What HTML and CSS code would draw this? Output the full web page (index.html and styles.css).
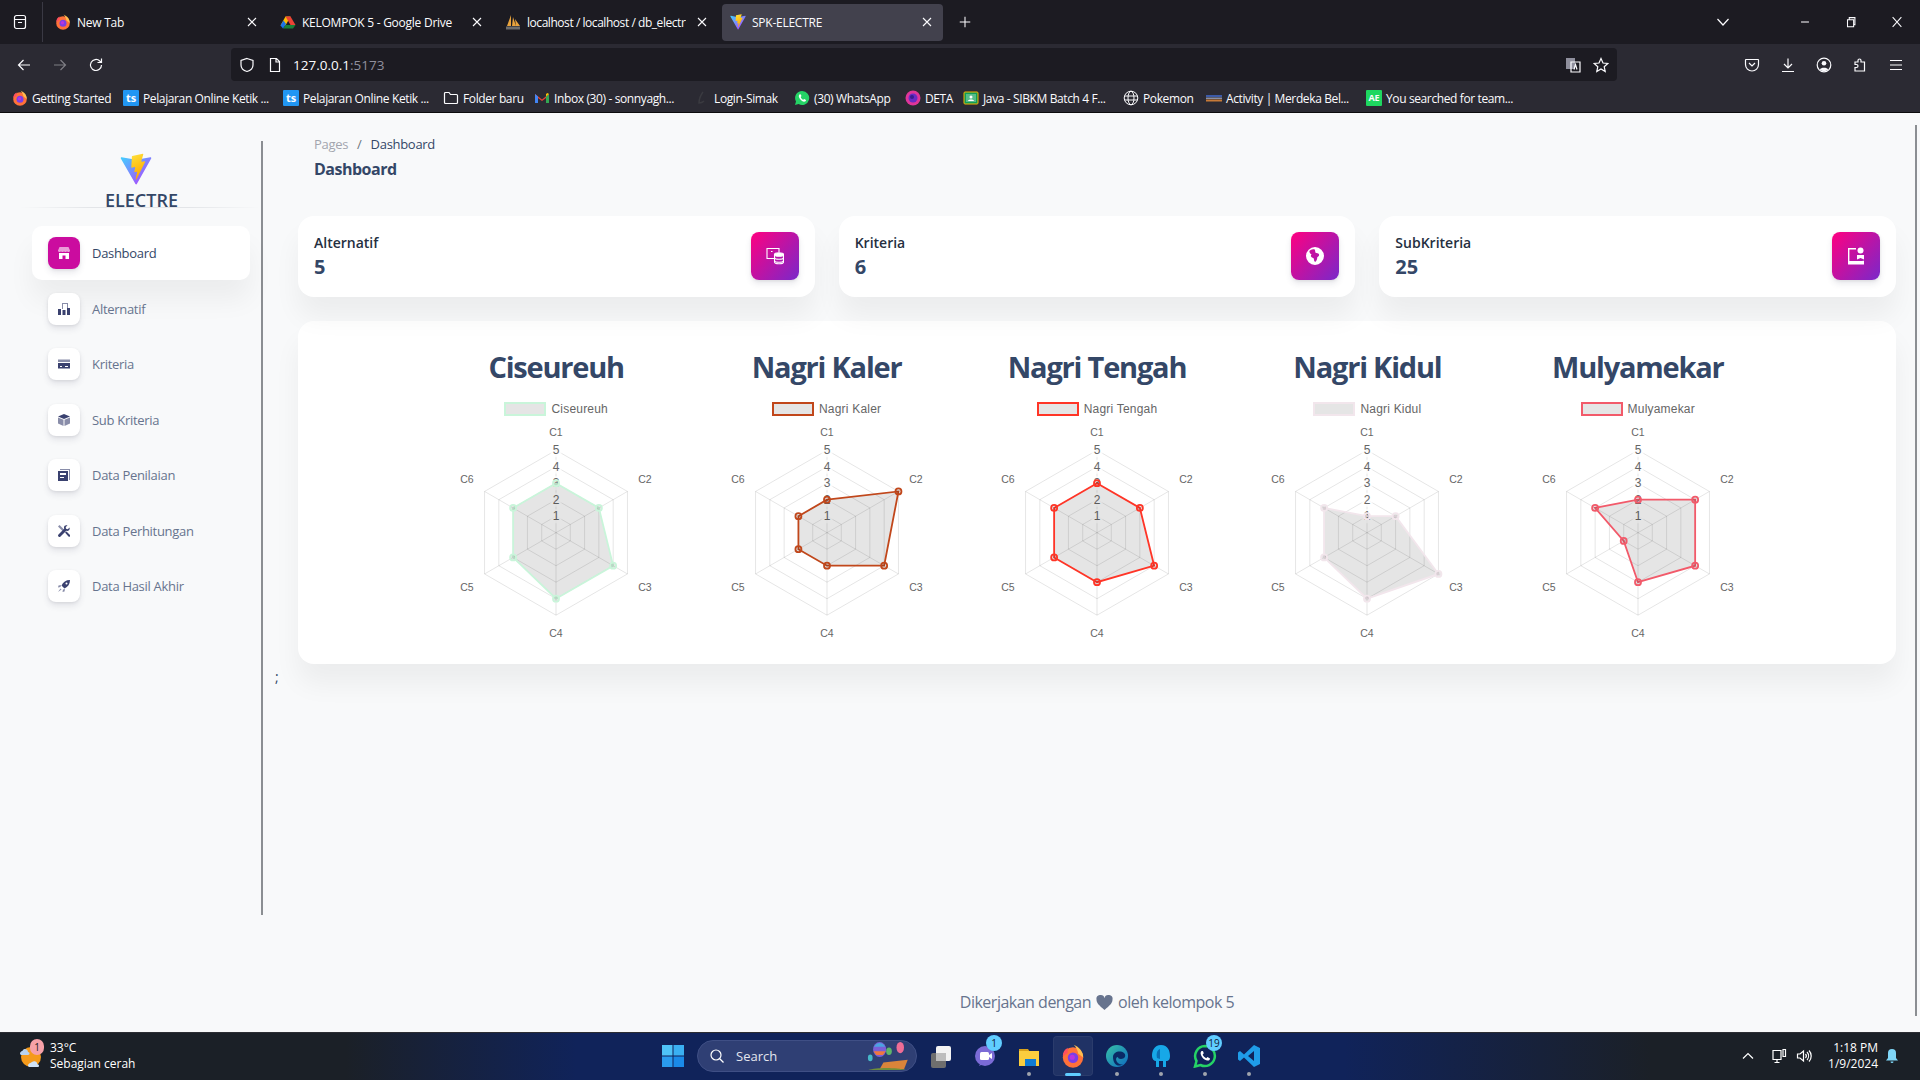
FILE: index.html
```html
<!DOCTYPE html>
<html lang="en">
<head>
    <meta charset="UTF-8">
    <meta name="viewport" content="width=device-width, initial-scale=1.0">
    <title>SPK-ELECTRE</title>
    <link rel="stylesheet" href="styles.css">
</head>
<body>
    <!-- shared icons -->
    <svg class="defs" width="0" height="0">
        <defs>
            <linearGradient id="viteOuter" x1="0" y1="0" x2="1" y2="1"><stop offset="0" stop-color="#41d1ff"/><stop offset="1" stop-color="#bd34fe"/></linearGradient>
            <linearGradient id="viteBolt" x1="0" y1="0" x2="0.3" y2="1"><stop offset="0" stop-color="#ffea83"/><stop offset="0.1" stop-color="#ffdd35"/><stop offset="1" stop-color="#ffa800"/></linearGradient>
            <linearGradient id="edgeGrad" x1="0" y1="0" x2="1" y2="1"><stop offset="0" stop-color="#37c1a6"/><stop offset="1" stop-color="#0f6cc2"/></linearGradient>
        </defs>
        <symbol id="i-firefox" viewBox="0 0 16 16">
            <circle cx="8" cy="9" r="6.800" fill="#ff7139"/>
            <path d="M8.500 0.500c3.500 1.500 6.500 4.500 6.300 8.500L11.500 6.500C11 4 10 2 8.500 0.500z" fill="#ffbd4f"/>
            <path d="M1.200 8C1.200 5.500 2.500 3.500 4.500 2.500L4.500 6z" fill="#ff4f5e"/>
            <circle cx="8" cy="9.200" r="3.500" fill="#7b3fe4"/>
            <circle cx="7.500" cy="8.800" r="1.700" fill="#b833e1"/>
        </symbol>
        <symbol id="i-vite" viewBox="0 0 410 404">
            <path fill="url(#viteOuter)" d="M399.641 59.525L215.643 388.545C211.844 395.338 202.084 395.378 198.228 388.618L10.582 59.556C6.381 52.19 12.68 43.267 21.028 44.759L205.223 77.682C206.398 77.892 207.601 77.89 208.776 77.676L389.119 44.806C397.439 43.289 403.768 52.143 399.641 59.525Z"/>
            <path fill="url(#viteBolt)" d="M292.965 1.574L156.801 28.255C154.563 28.694 152.906 30.59 152.771 32.866L144.395 174.33C144.198 177.662 147.258 180.248 150.51 179.498L188.42 170.749C191.967 169.931 195.172 173.055 194.443 176.622L183.18 231.775C182.422 235.487 185.907 238.661 189.532 237.56L212.947 230.446C216.577 229.344 220.065 232.527 219.297 236.242L201.398 322.875C200.278 328.294 207.486 331.249 210.492 326.603L212.5 323.5L323.454 102.072C325.312 98.365 322.108 94.137 318.036 94.923L279.014 102.454C275.347 103.161 272.227 99.746 273.262 96.158L298.731 7.867C299.767 4.273 296.636 0.855 292.965 1.574Z"/>
        </symbol>
        <symbol id="i-drive" viewBox="0 0 16 16">
            <path d="M5.500 1.500h5l-5 9H.5z" fill="#fbbc04" transform="translate(0 1)"/>
            <path d="M10.500 2.500l5 8.500h-5l-5-8.500z" fill="#ea4335"/>
            <path d="M3 14.500l2.500-3.500H15.500L13 14.500z" fill="#188038"/>
            <path d="M.5 11.500L3 14.500l3-4.500-2.500-3.500z" fill="#1a73e8"/>
        </symbol>
        <symbol id="i-pma" viewBox="0 0 16 16">
            <path d="M6 1L2 12h4zM8 3l-1 9h4zM10 5l1 7h4z" fill="#e8a33d"/>
            <rect x="1" y="12.500" width="14" height="3" fill="#6d6d6d"/>
        </symbol>
        <symbol id="i-folder" viewBox="0 0 16 16">
            <path d="M1.500 3.500a1 1 0 0 1 1-1h3.500l1.500 2h6a1 1 0 0 1 1 1v7a1 1 0 0 1-1 1h-11a1 1 0 0 1-1-1z" fill="none" stroke="#fbfbfe" stroke-width="1.200"/>
        </symbol>
        <symbol id="i-gmail" viewBox="0 0 16 16">
            <path d="M1 13V4l7 5.500L15 4v9h-3V8l-4 3-4-3v5z" fill="#ea4335"/>
            <path d="M1 4v9h3V6.500z" fill="#4285f4"/>
            <path d="M15 4v9h-3V6.500z" fill="#34a853"/>
            <path d="M12 6.500L15 4l-1.500-1L12 4z" fill="#fbbc04"/>
        </symbol>
        <symbol id="i-login" viewBox="0 0 16 16">
            <path d="M9 2C6 6 5 10 5 13c2 0 4-1 5-2" fill="none" stroke="#3a3a40" stroke-width="1.500"/>
        </symbol>
        <symbol id="i-whatsapp" viewBox="0 0 16 16">
            <path d="M8 1a7 7 0 0 0-6 10.500L1 15l3.600-1A7 7 0 1 0 8 1z" fill="#25d366"/>
            <path d="M5.500 4.500c-1 1-1 2.500.5 4.500s3.500 3 5 2.500c.8-.3 1-1 1-1.500L10.200 9l-.9.800C8.300 9.500 7 8.200 6.700 7l.8-.9L6.700 4.400c-.4-.1-.9-.1-1.200.1z" fill="#fff"/>
        </symbol>
        <symbol id="i-deta" viewBox="0 0 16 16">
            <circle cx="8" cy="8" r="7.500" fill="#e0359a"/>
            <circle cx="8" cy="8" r="4.500" fill="#6a2bc4"/>
            <circle cx="7" cy="7" r="2" fill="#3b1c8f"/>
        </symbol>
        <symbol id="i-classroom" viewBox="0 0 16 16">
            <rect x="1" y="2" width="14" height="12" rx="1" fill="#0f9d58" stroke="#f4b400" stroke-width="1"/>
            <rect x="3" y="4" width="10" height="8" fill="#57bb8a"/>
            <circle cx="8" cy="7" r="1.500" fill="#fff"/>
            <path d="M5 11c0-2 6-2 6 0z" fill="#fff"/>
        </symbol>
        <symbol id="i-globe" viewBox="0 0 16 16">
            <g fill="none" stroke="#fbfbfe" stroke-width="1">
                <circle cx="8" cy="8" r="6.800"/>
                <ellipse cx="8" cy="8" rx="3" ry="6.800"/>
                <path d="M1.500 6h13M1.500 10h13"/>
            </g>
        </symbol>
        <symbol id="i-merdeka" viewBox="0 0 16 16">
            <rect x="0" y="5" width="16" height="2" fill="#3c5aa8"/>
            <rect x="0" y="7.500" width="16" height="1.500" fill="#8a8fa5"/>
            <rect x="0" y="9.500" width="16" height="2" fill="#c77a38"/>
        </symbol>
        <symbol id="i-close" viewBox="0 0 16 16">
            <path d="M4 4l8 8M12 4l-8 8" fill="none" stroke="currentColor" stroke-width="1.100"/>
        </symbol>
    </svg>

    <header class="browser">
        <div class="tabstrip">
            <div class="tab-list-btn">
                <svg class="ico" viewBox="0 0 16 16"><path d="M2.500 5.500h11v7a2 2 0 0 1-2 2h-7a2 2 0 0 1-2-2zM4.500 1.500h7a2 2 0 0 1 2 2v2h-11v-2a2 2 0 0 1 2-2zM6 8.500h4"/></svg>
            </div>
            <div class="tab">
                <svg class="tab-icon"><use href="#i-firefox"/></svg>
                <span class="tab-title">New Tab</span>
                <svg class="tab-close"><use href="#i-close"/></svg>
            </div>
            <div class="tab">
                <svg class="tab-icon"><use href="#i-drive"/></svg>
                <span class="tab-title">KELOMPOK 5 - Google Drive</span>
                <svg class="tab-close"><use href="#i-close"/></svg>
            </div>
            <div class="tab">
                <svg class="tab-icon"><use href="#i-pma"/></svg>
                <span class="tab-title tab-title-long">localhost / localhost / db_electr</span>
                <svg class="tab-close"><use href="#i-close"/></svg>
            </div>
            <div class="tab tab-active">
                <svg class="tab-icon"><use href="#i-vite"/></svg>
                <span class="tab-title">SPK-ELECTRE</span>
                <svg class="tab-close"><use href="#i-close"/></svg>
            </div>
            <svg class="ico new-tab" viewBox="0 0 16 16"><path d="M8 2v12M2 8h12"/></svg>
            <div class="window-controls">
                <svg class="ico tab-overflow" viewBox="0 0 16 16"><path d="M2.500 5l5.500 6 5.500-6"/></svg>
                <svg class="ico win-btn" viewBox="0 0 16 16"><path d="M3.500 8h9"/></svg>
                <svg class="ico win-btn" viewBox="0 0 16 16"><path d="M4 5.500h7v8H4zM6 5.500v-2.500h6.500v8H11"/></svg>
                <svg class="ico win-btn" viewBox="0 0 16 16"><path d="M3 2.500l10 11M13 2.500l-10 11"/></svg>
            </div>
        </div>

        <div class="toolbar">
            <div class="nav-buttons">
                <div class="tool-btn"><svg class="ico" viewBox="0 0 16 16"><path d="M14 8H2.500M7.500 3l-5 5 5 5"/></svg></div>
                <div class="tool-btn tool-dim"><svg class="ico" viewBox="0 0 16 16"><path d="M2 8h11.500M8.500 3l5 5-5 5"/></svg></div>
                <div class="tool-btn"><svg class="ico" viewBox="0 0 16 16"><path d="M13.500 8a5.500 5.500 0 1 1-1.700-4L13.500 5.500M13.500 1.500v4h-4"/></svg></div>
            </div>
            <div class="urlbar">
                <svg class="ico" viewBox="0 0 16 16"><path d="M8 1.500l6 2v4.500c0 3.500-2.500 5.500-6 6.500-3.500-1-6-3-6-6.500V3.500z"/></svg>
                <svg class="ico" viewBox="0 0 16 16"><path d="M3.500 1.500h6l3 3v10h-9zM9 1.500v3.500h3.500"/></svg>
                <span class="url">127.0.0.1<span class="url-port">:5173</span></span>
                <svg class="ico url-translate" viewBox="0 0 16 16"><path class="fill-gray" d="M1 1h9v11H1z"/><path d="M6 5h9v10H6z"/><path d="M9 12.500l1.500-5 1.500 5"/></svg>
                <svg class="ico" viewBox="0 0 16 16"><path d="M8 1.500l2 4.500 4.800.5-3.600 3.200 1 4.800L8 12l-4.200 2.500 1-4.800L1.200 6.500 6 6z"/></svg>
            </div>
            <div class="tool-right">
                <div class="tool-btn"><svg class="ico" viewBox="0 0 16 16"><path d="M2 2.500h12a.5.500 0 0 1 .5.500v4.500a6.500 6.500 0 0 1-13 0V3a.5.500 0 0 1 .5-.5zM5 6l3 3 3-3"/></svg></div>
                <div class="tool-btn"><svg class="ico" viewBox="0 0 16 16"><path d="M8 1.500v9M4 7l4 4 4-4M2 14.500h12"/></svg></div>
                <div class="tool-btn"><svg class="ico" viewBox="0 0 16 16"><circle cx="8" cy="8" r="6.800"/><circle class="fill-white" cx="8" cy="6.300" r="2.300"/><path class="fill-white" d="M3.800 12.500c1-2.500 7.400-2.500 8.400 0a6 6 0 0 1-8.400 0z"/></svg></div>
                <div class="tool-btn"><svg class="ico" viewBox="0 0 16 16"><path d="M3 5h3V3.500a1.500 1.500 0 0 1 3 0V5h3.500v9H3v-3.500h1.500a1.500 1.500 0 0 0 0-3H3z"/></svg></div>
                <div class="tool-btn"><svg class="ico" viewBox="0 0 16 16"><path d="M2 3.500h12M2 8h12M2 12.500h12"/></svg></div>
            </div>
        </div>

        <div class="bookmarks">
            <a class="bm"><svg><use href="#i-firefox"/></svg>Getting Started</a>
            <a class="bm"><span class="bm-badge badge-ts">ts</span>Pelajaran Online Ketik ...</a>
            <a class="bm"><span class="bm-badge badge-ts">ts</span>Pelajaran Online Ketik ...</a>
            <a class="bm"><svg><use href="#i-folder"/></svg>Folder baru</a>
            <a class="bm"><svg><use href="#i-gmail"/></svg>Inbox (30) - sonnyagh...</a>
            <a class="bm"><svg><use href="#i-login"/></svg>Login-Simak</a>
            <a class="bm"><svg><use href="#i-whatsapp"/></svg>(30) WhatsApp</a>
            <a class="bm"><svg><use href="#i-deta"/></svg>DETA</a>
            <a class="bm"><svg><use href="#i-classroom"/></svg>Java - SIBKM Batch 4 F...</a>
            <a class="bm"><svg><use href="#i-globe"/></svg>Pokemon</a>
            <a class="bm"><svg><use href="#i-merdeka"/></svg>Activity | Merdeka Bel...</a>
            <a class="bm"><span class="bm-badge badge-ae">AE</span>You searched for team...</a>
        </div>
    </header>

    <div class="page">
        <aside class="sidebar">
            <svg class="brand-logo"><use href="#i-vite"/></svg>
            <div class="brand-name">ELECTRE</div>
            <hr class="brand-line">
            <nav class="side-nav">
                <a class="nav-item active">
                    <span class="nav-icon">
                        <svg viewBox="0 0 12 12"><path class="shade" d="M1.500 0h9L12 3.500c0 1-1 1.500-1.500 1.500S9 4.500 9 4.500 8 5 7.500 5 6 4.500 6 4.500 5 5 4.500 5 3 4.500 3 4.500 2 5 1.500 5 0 4.500 0 3.500z"/><path d="M1 6h10v6H7.500V8.500h-3V12H1z"/></svg>
                    </span>
                    Dashboard
                </a>
                <a class="nav-item">
                    <span class="nav-icon">
                        <svg viewBox="0 0 12 12"><path class="shade" d="M4 0h6v5H9V1H5v5H4z"/><path d="M0 6h3v6H0zM4.500 7h3v5h-3zM9 5h3v7H9z"/></svg>
                    </span>
                    Alternatif
                </a>
                <a class="nav-item">
                    <span class="nav-icon">
                        <svg viewBox="0 0 12 12"><path class="shade" d="M0 1.500h12v2.500H0z"/><path d="M0 5h12v5.500H0zM2 8v1h2V8zM7 8v1h3V8z" fill-rule="evenodd"/></svg>
                    </span>
                    Kriteria
                </a>
                <a class="nav-item">
                    <span class="nav-icon">
                        <svg viewBox="0 0 12 12"><path d="M6 0l6 2.500L6 5 0 2.500z"/><path class="shade" d="M0 3.500l5.500 2.300V12L0 9.500zM12 3.500L6.500 5.800V12L12 9.500z"/></svg>
                    </span>
                    Sub Kriteria
                </a>
                <a class="nav-item">
                    <span class="nav-icon">
                        <svg viewBox="0 0 12 12"><path class="shade" d="M2 0h10v11h-1V1H2z"/><path d="M0 2h10v10H0zM2 4v2h6V4zM2 8v1h4V8z" fill-rule="evenodd"/></svg>
                    </span>
                    Data Penilaian
                </a>
                <a class="nav-item">
                    <span class="nav-icon">
                        <svg viewBox="0 0 12 12"><path class="shade" d="M0 1.500L1.500 0l5 5-1.500 1.500z"/><path d="M11.500 2.500L9.800 4.200 8 3.800l-.3-1.700L9.500.5C8-.3 6 .5 6 2.500c0 .5.100.8.200 1.200L.5 9.500a1.400 1.400 0 0 0 2 2L8.300 5.800c2 .7 4-1 3.200-3.300zM7 7.500l3.500 4a1 1 0 0 0 1.500-1.500L8.500 6.500z"/></svg>
                    </span>
                    Data Perhitungan
                </a>
                <a class="nav-item">
                    <span class="nav-icon">
                        <svg viewBox="0 0 12 12"><path d="M12 0C8 0 5 2 3.500 5.500L6.500 8.500C10 7 12 4 12 0zM8.500 2.500a1 1 0 1 1 0 2 1 1 0 0 1 0-2z" fill-rule="evenodd"/><path class="shade" d="M3 5L.5 5.500 0 7.500l2.500-.5zM7 9l-.5 2.500-2 .5.500-2.500zM2.500 8.500L0 12l3.500-2.500z"/></svg>
                    </span>
                    Data Hasil Akhir
                </a>
            </nav>
        </aside>

        <main class="main">
            <div class="content">
                <div class="page-head">
                    <div class="crumbs"><span class="crumb-muted">Pages</span><span class="crumb-sep">/</span><span>Dashboard</span></div>
                    <h6 class="page-title">Dashboard</h6>
                </div>

                <section class="stats">
                    <div class="card stat">
                        <div>
                            <p class="stat-label">Alternatif</p>
                            <p class="stat-value">5</p>
                        </div>
                        <div class="stat-icon">
                            <svg viewBox="0 0 18 18" fill="none" stroke="#fff" stroke-width="1.100"><path d="M9 11.500H1V1.500h12V5"/><path d="M5 4.500h1.500"/><ellipse cx="13" cy="7.500" rx="4.500" ry="1.800" fill="#fff"/><path d="M8.500 10.500c0 2.300 9 2.300 9 0M8.500 13.500c0 2.300 9 2.300 9 0"/><path d="M8.500 7.500v7.500c0 2.300 9 2.300 9 0V7.500"/></svg>
                        </div>
                    </div>
                    <div class="card stat">
                        <div>
                            <p class="stat-label">Kriteria</p>
                            <p class="stat-value">6</p>
                        </div>
                        <div class="stat-icon">
                            <svg viewBox="1 1 16 16"><path fill="#fff" fill-rule="evenodd" d="M9 1a8 8 0 1 0 0 16A8 8 0 0 0 9 1zM4 4.500c1.500-1.500 3-1.500 4.500-1.500 1 1 .5 2.500 1 3 1 .5 2.500 0 3 1.500.5 1-.5 2-1.500 2.500 0 1.500-.5 3-1.500 4-1 .5-1.500-1-1.500-2.500-.5-1-2-1-2.500-2-.5-.5 0-1.500.5-2C5 7.500 4 6 4 4.500z"/></svg>
                        </div>
                    </div>
                    <div class="card stat">
                        <div>
                            <p class="stat-label">SubKriteria</p>
                            <p class="stat-value">25</p>
                        </div>
                        <div class="stat-icon">
                            <svg viewBox="0 0 18 18"><path fill="none" stroke="#fff" stroke-width="1.400" d="M9 1.700H1.700v15h14.600v-3"/><path fill="#fff" d="M1.700 14h14.600v3H1.700z"/><circle cx="13.500" cy="3.500" r="3" fill="#fff"/><path fill="#fff" d="M10 8h7v4.500l-3.500-1.500-3.500 1.500z"/></svg>
                        </div>
                    </div>
                </section>

                <section class="card charts">
                    <div class="chart chart-green">
                        <h2 class="chart-title">Ciseureuh</h2>
                        <div class="legend"><span class="swatch"></span><span class="legend-text">Ciseureuh</span></div>
                        <svg class="radar" data-values="3,3,4,4,3,3"></svg>
                    </div>
                    <div class="chart chart-rust">
                        <h2 class="chart-title">Nagri Kaler</h2>
                        <div class="legend"><span class="swatch"></span><span class="legend-text">Nagri Kaler</span></div>
                        <svg class="radar" data-values="2,5,4,2,2,2"></svg>
                    </div>
                    <div class="chart chart-red">
                        <h2 class="chart-title">Nagri Tengah</h2>
                        <div class="legend"><span class="swatch"></span><span class="legend-text">Nagri Tengah</span></div>
                        <svg class="radar" data-values="3,3,4,3,3,3"></svg>
                    </div>
                    <div class="chart chart-pale">
                        <h2 class="chart-title">Nagri Kidul</h2>
                        <div class="legend"><span class="swatch"></span><span class="legend-text">Nagri Kidul</span></div>
                        <svg class="radar" data-values="1,2,5,4,3,3"></svg>
                    </div>
                    <div class="chart chart-coral">
                        <h2 class="chart-title">Mulyamekar</h2>
                        <div class="legend"><span class="swatch"></span><span class="legend-text">Mulyamekar</span></div>
                        <svg class="radar" data-values="2,4,4,3,1,3"></svg>
                    </div>
                </section>
            </div>

            <p class="stray">;</p>

            <footer class="footer">
                Dikerjakan dengan
                <svg class="heart" viewBox="0 0 16 16"><path d="M8 15C3 11 .5 8.500.5 5.500A3.800 3.800 0 0 1 8 4a3.800 3.800 0 0 1 7.500 1.500C15.500 8.500 13 11 8 15z"/></svg>
                oleh kelompok 5
            </footer>

            <div class="scroll-line"></div>
        </main>
    </div>

    <footer class="taskbar">
        <div class="weather">
            <div class="weather-icon">
                <svg viewBox="0 0 24 28">
                    <circle cx="13" cy="15" r="10" fill="#f59a1b"/>
                    <path d="M2 12c0-3 3-3 3-4 1-2 5-1 5 2 2 0 2 3 0 3H3z" fill="#b9d3f0"/>
                    <path d="M10 24c0-3 3-3 4-4 2-2 6 0 5 2 2 0 3 3 1 3H11z" fill="#cfe2f7"/>
                </svg>
                <span class="weather-badge">1</span>
            </div>
            <div class="weather-text">
                <span>33°C</span>
                <span>Sebagian cerah</span>
            </div>
        </div>

        <div class="task-btn">
            <svg viewBox="0 0 24 24"><path fill="#4fc3f7" d="M1 1h10.500v10.500H1z"/><path fill="#3ab0f2" d="M12.500 1H23v10.500H12.500z"/><path fill="#2a9bee" d="M1 12.500h10.500V23H1z"/><path fill="#1a8ae8" d="M12.500 12.500H23V23H12.500z"/></svg>
        </div>

        <div class="search-pill">
            <svg class="ico search-glass" viewBox="0 0 16 16"><circle cx="7" cy="7" r="5"/><path d="M10.500 10.500l4 4"/></svg>
            <span class="search-text">Search</span>
            <svg class="search-art" viewBox="0 0 48 32">
                <ellipse cx="14" cy="9" rx="7" ry="8" fill="#7b5fd6"/>
                <path d="M8 6a7 8 0 0 1 12 0z" fill="#4aa3e0"/>
                <path d="M7.500 11h13l-3 4h-7z" fill="#f0773f"/>
                <ellipse cx="36" cy="7" rx="4" ry="6" fill="#ef6d96"/>
                <ellipse cx="24" cy="11" rx="3" ry="4" fill="#5fb56a"/>
                <ellipse cx="4" cy="18" rx="2.500" ry="3.500" fill="#46b7c9"/>
                <path d="M14 30l4-7 26-3-4 10z" fill="#d9843a"/>
                <path d="M2 31c8-3 30-3 40 0z" fill="#6f8f3a"/>
            </svg>
        </div>

        <div class="task-btn">
            <svg viewBox="0 0 24 24"><rect x="7" y="2" width="15" height="15" rx="2" fill="#f3f3f3"/><rect x="2" y="9" width="15" height="15" rx="2" fill="#6e6e6e"/><rect x="7" y="9" width="10" height="8" fill="#bdbdbd"/></svg>
        </div>
        <div class="task-btn badge-host">
            <svg viewBox="0 0 24 24"><circle cx="12" cy="12" r="10" fill="#7b6bd6"/><path d="M6 22l2-4h6z" fill="#7b6bd6"/><rect x="7" y="8" width="9" height="8" rx="1.500" fill="#fff"/><path d="M16 11l3-2v6l-3-2z" fill="#fff"/></svg>
            <span class="task-badge">1</span>
        </div>
        <div class="task-btn">
            <svg viewBox="0 0 24 24"><path d="M2 5h9l2 3H2z" fill="#d9a21b"/><path d="M2 7h20v15H2z" fill="#fbcd3e"/><rect x="8" y="15" width="11" height="7" fill="#0f7bd4"/></svg>
            <i class="dot"></i>
        </div>
        <div class="task-btn task-current">
            <svg><use href="#i-firefox"/></svg>
            <i class="dot dot-wide"></i>
        </div>
        <div class="task-btn">
            <svg viewBox="0 0 24 24"><circle cx="12" cy="12" r="11" fill="url(#edgeGrad)"/><path d="M8 13c0-5 7-7 11-4 3 3 0 6-3 6-2 0-3-1-3-2-2 0-3 3 0 6 1 1 3 2 5 1-5 4-10 0-10-7z" fill="#0a2a66"/></svg>
            <i class="dot"></i>
        </div>
        <div class="task-btn">
            <svg viewBox="0 0 24 24"><path d="M12 1C5 1 3 7 3 12c0 3 2 5 4 5v6h3v-6h4v6h3v-6c3 0 4-2 4-5 0-5-2-11-9-11z" fill="#17a8e8"/><path d="M11 5c-3 1-4 5-3 9l3 1z" fill="#0a6fb4"/></svg>
            <i class="dot"></i>
        </div>
        <div class="task-btn badge-host">
            <svg viewBox="0 0 24 24"><path d="M12 2A10 10 0 0 0 3.500 17L2 22.500 7.500 21A10 10 0 1 0 12 2z" fill="none" stroke="#25d366" stroke-width="2.500"/><path d="M8.500 7c-1.500 1.500-1 3.500.5 6s4.500 4 6.500 3.500c1-.3 1.500-1.300 1.500-2l-2.500-1.500-1.300 1.200c-1.300-.5-3-2.200-3.500-3.700l1.100-1.200L10 7.200c-.5-.3-1-.4-1.500-.2z" fill="#fff"/></svg>
            <span class="task-badge">19</span>
            <i class="dot"></i>
        </div>
        <div class="task-btn">
            <svg viewBox="0 0 24 24"><path d="M17 1l6 3v16l-6 3-10-9.500L3 17l-2-1.500V8.500L3 7l4 3.500zM17 7l-6 5 6 5z" fill="#1f9ce8" fill-rule="evenodd"/></svg>
            <i class="dot"></i>
        </div>

        <div class="tray">
            <svg class="ico" viewBox="0 0 16 16"><path d="M3 10.500L8 5.500l5 5"/></svg>
            <svg class="ico tray-net" viewBox="0 0 16 16"><path d="M2 2.500h8v9H2zM12 1.500h2.500v7H12zM6 11.500v2.500M3.500 14.500h5"/></svg>
            <svg class="ico tray-vol" viewBox="0 0 16 16"><path d="M1.500 6h2.500L7.500 3v10L4 10H1.500zM9.500 6a3 3 0 0 1 0 4M11 4a6 6 0 0 1 0 8M13 2.500a8 8 0 0 1 0 11"/></svg>
            <div class="clock"><span>1:18 PM</span><span>1/9/2024</span></div>
            <svg class="tray-bell" viewBox="0 0 16 16"><path fill="#7fd6f7" d="M8 1a4 4 0 0 0-4 4v5l-2 2.500h12L12 10V5a4 4 0 0 0-4-4zM6.500 13.500h3a1.500 1.500 0 0 1-3 0z"/></svg>
        </div>
    </footer>

    <script src="charts.js"></script>
</body>
</html>
```

FILE: styles.css
```css
* {
    box-sizing: border-box;
}

body {
    margin: 0;
    width: 1920px;
    height: 1080px;
    overflow: hidden;
    display: flex;
    flex-direction: column;
    font-family: "Open Sans", "Noto Sans", sans-serif;
    background-color: #f8f9fa;
}

.defs {
    position: absolute;
}

.ico {
    width: 16px;
    height: 16px;
    flex: none;
    fill: none;
    stroke: currentColor;
    stroke-width: 1.2;
}

.fill-gray {
    fill: #8f8f9d;
    stroke: none;
}

.fill-white {
    fill: #fbfbfe;
    stroke: none;
}

/* browser chrome */
.browser {
    flex: none;
    color: #fbfbfe;
    font-size: 12px;
}

.tabstrip {
    height: 44px;
    display: flex;
    align-items: center;
    background-color: #1c1b22;
}

.tab-list-btn {
    width: 43px;
    height: 40px;
    padding-left: 12px;
    margin-right: 4px;
    display: flex;
    align-items: center;
    border-right: 1px solid #3a3944;
}

.tab {
    width: 221px;
    height: 37px;
    margin-right: 4px;
    padding: 0 8px;
    display: flex;
    align-items: center;
    gap: 6px;
    border-radius: 4px;
}

.tab-active {
    background-color: #42414d;
}

.tab-icon {
    width: 16px;
    height: 16px;
    flex: none;
}

.tab-title {
    flex: 1;
    overflow: hidden;
    white-space: nowrap;
    letter-spacing: -0.25px;
}

.tab-title-long {
    letter-spacing: -0.45px;
}

.tab-close {
    width: 16px;
    height: 16px;
    flex: none;
    margin-left: 2px;
}

.new-tab {
    margin-left: 11px;
    width: 14px;
    height: 14px;
}

.window-controls {
    margin-left: auto;
    display: flex;
    align-items: center;
}

.tab-overflow {
    margin-right: 67px;
}

.win-btn {
    width: 14px;
    height: 14px;
    margin-right: 32px;
}

.win-btn:last-child {
    margin-right: 16px;
}

.toolbar {
    height: 42px;
    padding-bottom: 1px;
    display: flex;
    align-items: center;
    background-color: #2b2a33;
}

.nav-buttons {
    display: flex;
    padding-left: 6px;
    width: 231px;
}

.tool-btn {
    width: 36px;
    display: flex;
    justify-content: center;
}

.tool-dim {
    opacity: 0.4;
}

.urlbar {
    width: 1386px;
    height: 33px;
    padding: 0 8px;
    display: flex;
    align-items: center;
    gap: 12px;
    background-color: #1c1b22;
    border-radius: 4px;
}

.url {
    margin-left: -2px;
    font-size: 13.5px;
}

.url-port {
    color: #8f8f9d;
}

.url-translate {
    margin-left: auto;
}

.tool-right {
    margin-left: auto;
    padding-right: 6px;
    display: flex;
}

.bookmarks {
    height: 27px;
    padding: 0 0 2px 12px;
    display: grid;
    grid-template-columns: 111px 160px 160px 91px 160px 100px 111px 58px 160px 83px 160px 160px;
    align-items: center;
    background-color: #2b2a33;
    border-bottom: 1px solid #0c0c0d;
    letter-spacing: -0.38px;
}

.bm {
    display: flex;
    align-items: center;
    gap: 4px;
    white-space: nowrap;
}

.bm svg {
    width: 16px;
    height: 16px;
    flex: none;
}

.bm-badge {
    width: 16px;
    height: 16px;
    flex: none;
    border-radius: 1px;
    font-size: 11px;
    line-height: 15px;
    font-weight: 700;
    text-align: center;
    letter-spacing: 0;
}

.badge-ts {
    background-color: #2196f3;
}

.badge-ae {
    background-color: #1ed760;
    font-size: 9px;
}

/* page */
.page {
    flex: 1;
    display: flex;
    min-height: 0;
}

.sidebar {
    flex: none;
    width: 263px;
    height: 774px;
    margin-top: 28px;
    border-right: 2px solid #8b8e92;
    display: flex;
    flex-direction: column;
}

.brand-logo {
    width: 32px;
    height: 33px;
    margin: 12px 0 0 120px;
}

.brand-name {
    margin: 7px 0 0 105px;
    font-size: 18px;
    line-height: 14px;
    font-weight: 600;
    color: #344767;
}

.brand-line {
    width: 240px;
    height: 1px;
    margin: 0 0 18px 20px;
    border: 0;
    background-image: linear-gradient(90deg, transparent, #e3e5e8 30%, #e3e5e8 70%, transparent);
}

.side-nav {
    display: flex;
    flex-direction: column;
    gap: 1.5px;
    margin-left: 32px;
    width: 218px;
}

.nav-item {
    height: 54px;
    padding: 0 16px;
    display: flex;
    align-items: center;
    gap: 12px;
    border-radius: 10px;
    font-size: 13px;
    letter-spacing: -0.3px;
    color: #67748e;
}

.nav-item.active {
    background-color: #fff;
    color: #344767;
    box-shadow: 0 20px 27px rgba(0, 0, 0, 0.05);
}

.nav-icon {
    width: 32px;
    height: 32px;
    display: flex;
    align-items: center;
    justify-content: center;
    border-radius: 8px;
    background-color: #fff;
    box-shadow: 0 4px 6px rgba(50, 50, 93, 0.1), 0 1px 3px rgba(0, 0, 0, 0.08);
}

.nav-icon svg {
    width: 12px;
    height: 12px;
    fill: #3a416f;
}

.nav-icon .shade {
    opacity: 0.6;
}

.nav-item.active .nav-icon {
    background-color: #cb0c9f;
}

.nav-item.active .nav-icon svg {
    fill: #fff;
}

.main {
    flex: 1;
    position: relative;
    min-width: 0;
    padding: 21px 24px 0 12px;
    display: flex;
    flex-direction: column;
}

.content {
    margin-left: 23px;
}

.page-head {
    padding-left: 16px;
    margin-bottom: 35px;
    color: #344767;
}

.crumbs {
    font-size: 13px;
    line-height: 20px;
    letter-spacing: -0.3px;
    display: flex;
}

.crumb-muted {
    color: #a3a5ae;
}

.crumb-sep {
    margin: 0 9px;
    color: #6c757d;
}

.page-title {
    margin: 3px 0 0;
    font-size: 16px;
    line-height: 24px;
    font-weight: 700;
    letter-spacing: -0.5px;
}

.stats {
    display: flex;
    gap: 24px;
    margin-bottom: 24px;
}

.card {
    background-color: #fff;
    border-radius: 16px;
    box-shadow: 0 20px 27px rgba(0, 0, 0, 0.05);
}

.stat {
    flex: 1;
    height: 81px;
    padding: 16px;
    display: flex;
    justify-content: space-between;
}

.stat-label {
    margin: 1px 0 0;
    font-size: 14px;
    line-height: 20px;
    font-weight: 600;
    color: #252f40;
}

.stat-value {
    margin: 1px 0 0;
    font-size: 20px;
    line-height: 26px;
    font-weight: 700;
    color: #344767;
}

.stat-icon {
    width: 48px;
    height: 48px;
    display: flex;
    align-items: center;
    justify-content: center;
    border-radius: 8px;
    background-image: linear-gradient(310deg, #7928ca, #ff0080);
    box-shadow: 0 4px 6px rgba(50, 50, 93, 0.1), 0 1px 3px rgba(0, 0, 0, 0.08);
}

.stat-icon svg {
    width: 18px;
    height: 18px;
}

/* charts */
.charts {
    height: 343px;
    padding-top: 23px;
    display: flex;
    justify-content: center;
}

.chart {
    width: 270.4px;
    display: flex;
    flex-direction: column;
    align-items: center;
}

.chart-green { color: #c9f5da; }
.chart-rust { color: #c1471b; }
.chart-red { color: #ff3527; }
.chart-pale { color: #f2e6ec; }
.chart-coral { color: #f25a6a; }

.chart-title {
    margin: 0;
    font-size: 29px;
    line-height: 45px;
    font-weight: 700;
    letter-spacing: -1.2px;
    color: #344767;
    white-space: nowrap;
}

.legend {
    margin-top: 13px;
    margin-bottom: 1px;
    display: flex;
    align-items: center;
    gap: 5px;
    height: 14px;
}

.swatch {
    width: 42px;
    height: 14px;
    background-color: #e5e5e5;
    border: 2px solid currentColor;
}

.legend-text {
    font-family: "Liberation Sans", Arial, sans-serif;
    font-size: 12px;
    letter-spacing: 0.2px;
    color: #666;
}

.radar {
    width: 270px;
    height: 225px;
    margin-top: 4px;
}

.radar text {
    font-family: "Liberation Sans", Arial, sans-serif;
    fill: #666;
    text-anchor: middle;
    dominant-baseline: central;
}

.radar .tick {
    font-size: 12px;
}

.radar .axis-label {
    font-size: 10.5px;
}

.radar .grid {
    fill: none;
    stroke: rgba(0, 0, 0, 0.1);
    stroke-width: 1;
}

.radar .backdrop {
    fill: rgba(255, 255, 255, 0.75);
}

.radar .area {
    fill: rgba(0, 0, 0, 0.1);
    stroke: currentColor;
    stroke-width: 1.8;
}

.radar .point {
    fill: rgba(0, 0, 0, 0.1);
    stroke: currentColor;
    stroke-width: 1.8;
}

.stray {
    margin: 3px 0 0;
    font-size: 14px;
    line-height: 20px;
    color: #344767;
}

.footer {
    margin: auto 0 18px 23px;
    height: 24px;
    display: flex;
    align-items: center;
    justify-content: center;
    gap: 5px;
    font-size: 16px;
    letter-spacing: -0.5px;
    color: #67748e;
}

.heart {
    width: 17px;
    height: 17px;
    fill: #67748e;
}

.scroll-line {
    position: absolute;
    top: 12px;
    bottom: 16px;
    right: 3px;
    width: 2px;
    background-color: #8b8e92;
}

/* windows taskbar */
.taskbar {
    flex: none;
    height: 48px;
    padding-bottom: 2px;
    display: flex;
    align-items: center;
    color: #fff;
    font-size: 12px;
    border-top: 1px solid #2c2d33;
    background-image: linear-gradient(90deg, #1b2027 0, #1b2027 18%, #10235a 30%, #10235a 70%, #1b2027 86%);
}

.weather {
    width: 651px;
    padding-left: 18px;
    display: flex;
    align-items: center;
    gap: 8px;
}

.weather-icon {
    position: relative;
    width: 24px;
    height: 28px;
}

.weather-icon svg {
    width: 24px;
    height: 28px;
}

.weather-badge {
    position: absolute;
    top: -3px;
    left: 12px;
    width: 14px;
    height: 16px;
    border-radius: 8px;
    background-color: #f7a1a8;
    color: #222;
    font-size: 10px;
    line-height: 16px;
    text-align: center;
}

.weather-text {
    display: flex;
    flex-direction: column;
    line-height: 16px;
    font-size: 12px;
}

.task-btn {
    position: relative;
    width: 44px;
    height: 40px;
    flex: none;
    display: flex;
    align-items: center;
    justify-content: center;
    border-radius: 4px;
}

.task-btn > svg {
    width: 24px;
    height: 24px;
}

.task-current {
    width: 40px;
    margin: 0 2px;
    background-color: rgba(255, 255, 255, 0.07);
    box-shadow: inset 0 0 0 1px rgba(255, 255, 255, 0.05);
}

.dot {
    position: absolute;
    left: 20px;
    bottom: 0;
    width: 4px;
    height: 4px;
    border-radius: 2px;
    background-color: #a0a4ad;
}

.dot-wide {
    left: 12px;
    width: 16px;
    height: 3px;
    background-color: #60cdff;
}

.task-badge {
    position: absolute;
    top: -1px;
    left: 23px;
    min-width: 16px;
    height: 16px;
    padding: 0 2px;
    border-radius: 8px;
    background-color: #60cdff;
    color: #10193a;
    font-size: 10px;
    line-height: 16px;
    text-align: center;
}

.search-pill {
    width: 220px;
    height: 32px;
    margin: 0 2px;
    padding: 0 3px 0 11px;
    flex: none;
    display: flex;
    align-items: center;
    gap: 11px;
    border-radius: 16px;
    background-color: #2f3f74;
    border: 1px solid #3f4f85;
}

.search-text {
    font-size: 13px;
    color: #e4e6ee;
}

.search-art {
    margin-left: auto;
    width: 48px;
    height: 30px;
}

.tray {
    margin-left: auto;
    padding-right: 20px;
    display: flex;
    align-items: center;
}

.tray-net {
    margin-left: 15px;
}

.tray-vol {
    margin-left: 9px;
}

.clock {
    width: 60px;
    margin: 0 0 0 6px;
    display: flex;
    flex-direction: column;
    align-items: flex-end;
    line-height: 16px;
    font-size: 12px;
}

.tray-bell {
    width: 16px;
    height: 16px;
    margin-left: 6px;
}
```

FILE: charts.js
```js
// draws the radar charts from the values on each svg
const LABELS = ['C1', 'C2', 'C3', 'C4', 'C5', 'C6'];
const LABEL_POS = [[0, -101], [89, -53.5], [89, 54], [0, 100.6], [-89, 54], [-89, -53.5]];
const STEP = 16.5;
const MAX = 5;

function vertex(i, value) {
    const angle = (i * Math.PI) / 3 - Math.PI / 2;
    const r = value * STEP;
    return [r * Math.cos(angle), r * Math.sin(angle)];
}

function drawRadar(svg) {
    const values = svg.dataset.values.split(',').map(Number);
    let html = '';

    for (let level = 1; level <= MAX; level++) {
        const pts = LABELS.map((_, i) => vertex(i, level).join(',')).join(' ');
        html += `<polygon class="grid" points="${pts}"/>`;
    }
    LABELS.forEach((_, i) => {
        const [x, y] = vertex(i, MAX);
        html += `<line class="grid" x1="0" y1="0" x2="${x}" y2="${y}"/>`;
    });
    for (let level = 1; level <= MAX; level++) {
        const y = -level * STEP;
        html += `<rect class="backdrop" x="-5.500" y="${y - 7}" width="11" height="14"/>`;
        html += `<text class="tick" x="0" y="${y}">${level}</text>`;
    }
    LABELS.forEach((label, i) => {
        html += `<text class="axis-label" x="${LABEL_POS[i][0]}" y="${LABEL_POS[i][1]}">${label}</text>`;
    });

    const shape = values.map((v, i) => vertex(i, v).join(',')).join(' ');
    html += `<polygon class="area" points="${shape}"/>`;
    values.forEach((v, i) => {
        const [x, y] = vertex(i, v);
        html += `<circle class="point" cx="${x}" cy="${y}" r="3"/>`;
    });

    svg.setAttribute('viewBox', '-135 -111.7 270 225');
    svg.innerHTML = html;
}

document.querySelectorAll('.radar').forEach(drawRadar);
```
